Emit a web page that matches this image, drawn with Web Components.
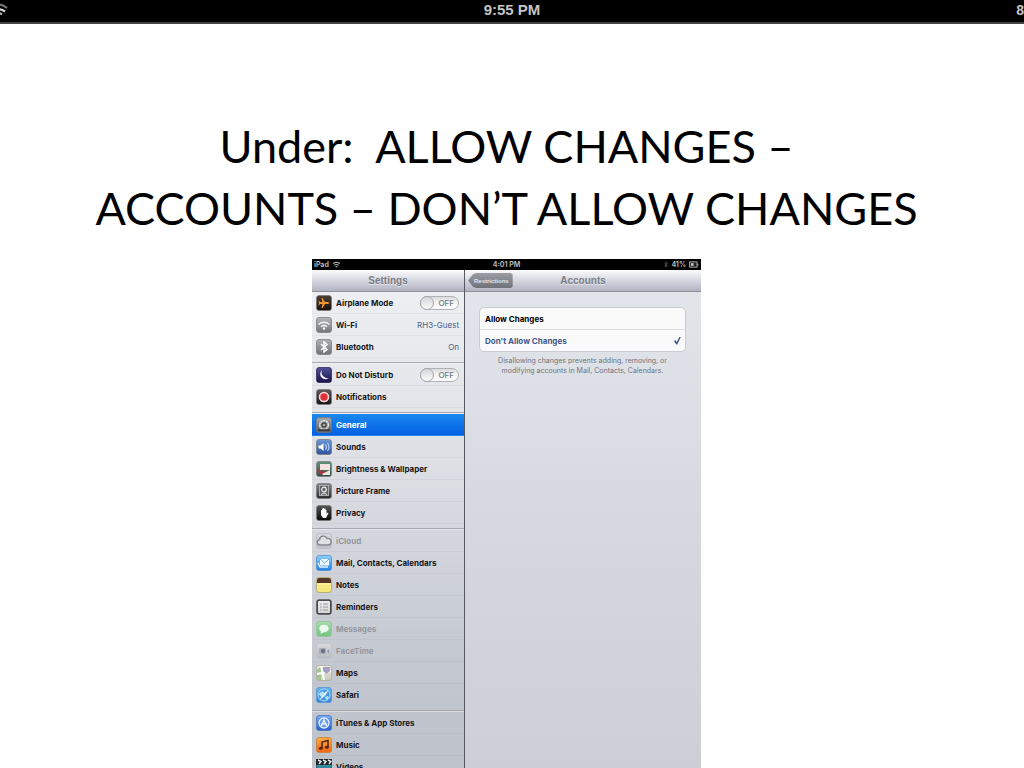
<!DOCTYPE html>
<html lang="en">
<head>
<meta charset="utf-8">
<title>Restrictions: Accounts</title>
<style>
html, body { margin: 0; height: 100%; overflow: hidden; background: #fff; }
body { font-family: "Liberation Sans", Arial, sans-serif; color: #000; }
</style>
</head>
<body>
<slide-page>
  <device-bar slot="bar">9:55 PM</device-bar>
  <slide-title slot="title"><span>Under:&nbsp; ALLOW CHANGES –</span> <span>ACCOUNTS – DON’T ALLOW CHANGES</span></slide-title>
  <settings-screen></settings-screen>
</slide-page>
<script>
function define(name, html, setup) {
  const t = document.createElement('template');
  t.innerHTML = html;
  customElements.define(name, class extends HTMLElement {
    constructor() {
      super();
      this.attachShadow({ mode: 'open' }).append(t.content.cloneNode(true));
    }
    connectedCallback() { if (setup) setup(this, this.shadowRoot); }
  });
}

define('slide-page', `
<style>
:host { display: flex; flex-direction: column; height: 100vh; }
main { flex: 1; min-height: 0; display: flex; flex-direction: column; align-items: center; padding: 91px 11px 0 0; gap: 20px; }
::slotted(settings-screen) { flex: 1; min-height: 0; }
</style>
<slot name="bar"></slot><main><slot name="title"></slot><slot></slot></main>`);

define('device-bar', `
<style>
:host { display: grid; grid-template-columns: 1fr auto 1fr; align-items: start; height: 22px; background: #000; border-bottom: 2px solid #444; color: #c4c4c4; font-weight: bold; font-size: 15px; line-height: 20px; overflow: hidden; }
svg { display: block; width: 8px; height: 20px; }
.battery { text-align: right; font-size: 14px; }
</style>
<svg viewBox="0 0 8 20" fill="none" stroke-width="2.2"><path d="M-9 8Q-1 1 7 8" stroke="#777"/><path d="M-6 11.500Q-1 7 5 11.500" stroke="#ddd"/><path d="M-3 14.500Q-1 12 2 14.500" stroke="#bbb"/></svg>
<span><slot></slot></span><span class="battery">8</span>`);

define('slide-title', `
<style>
:host { display: block; }
h1 { margin: 0; font: 400 45px/62px Lato, sans-serif; text-align: center; }
::slotted(span) { display: block; white-space: nowrap; }
</style>
<h1><slot></slot></h1>`);

const svg = (bg, body, border = '#777') => `<svg viewBox="0 0 16 16"><defs><linearGradient id="g" x2="0" y2="1"><stop stop-color="${bg[0]}"/><stop offset="1" stop-color="${bg[1]}"/></linearGradient></defs><rect x=".5" y=".5" width="15" height="15" rx="2.500" fill="url(#g)" stroke="${border}" stroke-opacity=".7"/>${body}</svg>`;
const ICONS = {
  airplane: svg(['#4a4038', '#15100d'], '<path d="M13.500 8 12 7H9L6.500 3H5.500L6.500 7H4L3 5.500H2.500L3 8l-.5 2.500H3L4 9h2.500l-1 4h1L9 9h3z" fill="#f5952b"/>'),
  wifi: svg(['#b4b6b9', '#74777b'], '<g fill="none" stroke="#f6f6f6" stroke-width="1.500"><path d="M2.500 7.500Q8 3 13.500 7.500M5 9.700Q8 7 11 9.700"/></g><circle cx="8" cy="11.500" r="1.200" fill="#fff"/>'),
  bluetooth: svg(['#b0b2b5', '#707377'], '<path d="M5 5l6 5.500L8 13V3l3 2.500L5 11" fill="none" stroke="#fff" stroke-width="1.400"/>'),
  moon: svg(['#514f97', '#18144d'], '<path d="M6 3A5.200 5.200 0 1 0 13 11 6 6 0 0 1 6 3z" fill="#eef"/>', '#222050'),
  notify: svg(['#615a5a', '#161313'], '<circle cx="8" cy="8" r="4.500" fill="#e33039" stroke="#f3dada" stroke-width="1.600"/>'),
  general: svg(['#a8a9ab', '#57595d'], '<circle cx="8" cy="8" r="4.300" fill="#777" stroke="#e5e5e5" stroke-width="1.600" stroke-dasharray="2.200 .5"/><circle cx="8" cy="8" r="2" fill="#aaa" stroke="#333"/><path d="M2 13h12" stroke="#333" stroke-width="1.500"/>'),
  sounds: svg(['#6f98d5', '#2c539e'], '<path d="M2.500 6.500h2l3-2.500v8l-3-2.500h-2z" fill="#fff"/><path d="M9.500 5.500q2 2.500 0 5M11.500 4q3 4 0 8" fill="none" stroke="#b9d0f5" stroke-width="1.200"/>'),
  brightness: svg(['#62927b', '#344c42'], '<path d="M4 3h10v6H4z" fill="#f4e3e2"/><path d="M2 8l5 3 5-1v3H3z" fill="#b7323b"/><path d="M6 13l8-4v5H7z" fill="#e5ece4"/>'),
  frame: svg(['#85878a', '#292b2e'], '<rect x="3.500" y="2.500" width="9" height="10" fill="#606367" stroke="#aaa"/><circle cx="8" cy="6.500" r="2.300" fill="none" stroke="#eee" stroke-width="1.200"/><path d="M5 11.500q3-3 6 0" stroke="#eee" fill="none"/>'),
  privacy: svg(['#555', '#080808'], '<path d="M5 7V5h1V3.500h1V3h1.300v.7h1.200v1h1V9l1-1.500 1 .5-2.500 5h-3L5 10z" fill="#fff"/>'),
  cloud: svg(['#d6d8dc', '#bfc2c8'], '<path d="M3.500 12a2.700 2.700 0 0 1 0-5.300A3.900 3.900 0 0 1 11 5.500a3 3 0 0 1 1.500 6.500z" fill="#dfe0e4" stroke="#83868c" stroke-width="1.300"/>', '#b4b7bd'),
  mail: svg(['#8fd1fa', '#2581df'], '<rect x="4" y="4" width="9" height="6.500" rx=".5" fill="#f2f9ff"/><path d="M4 4l4.500 4L13 4" fill="none" stroke="#68ade8"/><path d="M2 8l2 4h8" fill="none" stroke="#e4f4ff" stroke-width="1.300"/>', '#438dcf'),
  notes: svg(['#fff6a4', '#f4e778'], '<path d="M1 6V3a2 2 0 0 1 2-2h10a2 2 0 0 1 2 2v3z" fill="#55352a"/><path d="M2 9h12M2 12h12" stroke="#e6d76d" stroke-width=".6"/>', '#a39a65'),
  reminders: svg(['#eee', '#d4d4d4'], '<rect x="1.200" y="1.200" width="13.600" height="13.600" rx="2" fill="none" stroke="#4b4d51" stroke-width="1.600"/><path d="M4 5h1.500M7 5h5M4 8h1.500M7 8h5M4 11h1.500M7 11h5" stroke="#9a9a9a"/>'),
  messages: svg(['#a6dcae', '#73c47f'], '<ellipse cx="8" cy="7.500" rx="4.700" ry="3.800" fill="#ecf8ed"/><path d="M5 10l-.5 3L8 11z" fill="#ecf8ed"/>', '#8dc695'),
  facetime: svg(['#d8dadf', '#b8bbc2'], '<rect x="3" y="5" width="7" height="6" rx="1" fill="#a8adb8"/><circle cx="7" cy="8" r="2" fill="#626b80"/><path d="M11 8l2-1.500v4z" fill="#8c92a0"/>', '#bec1c8'),
  maps: svg(['#f0eee2', '#c8c9bb'], '<path d="M1 5l4-4v14H1z" fill="#a1c68e"/><path d="M5 1l3 14M1 9l14-3" stroke="#fff" stroke-width="2"/><path d="M7 2h7v4l-3.500 3L7 6z" fill="#a79fc4"/>', '#a6a899'),
  safari: svg(['#66b5f2', '#3e85d8'], '<circle cx="8" cy="8" r="6" fill="#4197e5" stroke="#a9d8f8"/><path d="M2.500 7l4-3 2 2-3 4zM9 10l3-1 1 2-3 2z" fill="#b7e1f5"/><path d="M12.500 3L9 9 7 7z" fill="#fff"/><path d="M3.500 13L7 7l2 2z" fill="#dcecff"/>', '#4c92cf'),
  itunes: svg(['#7ca9f1', '#2860cd'], '<circle cx="8" cy="8" r="5" fill="#609cec" stroke="#e3efff" stroke-width="1.300"/><path d="M5.500 11L8 5l2.500 6M5 9h6" fill="none" stroke="#fff" stroke-width="1.200"/>', '#3d70bd'),
  music: svg(['#ffad46', '#ec6514'], '<path d="M6 11V5l6-1.500V10" fill="none" stroke="#55230c" stroke-width="1.500"/><ellipse cx="4.800" cy="11.300" rx="1.900" ry="1.500" fill="#55230c"/><ellipse cx="10.800" cy="10.300" rx="1.900" ry="1.500" fill="#55230c"/>', '#cb772e'),
  videos: svg(['#47a7bd', '#1c6c83'], '<path d="M0 0h16v6H0z" fill="#20282c"/><path d="M2 1l3 1.500L3 5M7 1l3 1.500L8 5M12 1l3 1.500L13 5" fill="none" stroke="#e9eff0" stroke-width="1.400"/>', '#244')
};

define('app-icon', `<style>:host { display: block; width: 16px; height: 16px; } svg { display: block; width: 100%; height: 100%; }</style><span></span>`,
  (el, root) => { root.querySelector('span').innerHTML = ICONS[el.getAttribute('name')]; });

define('off-switch', `
<style>
:host { display: block; }
label { position: relative; display: flex; align-items: center; justify-content: flex-end; box-sizing: border-box; width: 39px; height: 14px; padding-right: 4px; border: 1px solid #b0b2b6; border-radius: 7px; background: linear-gradient(#dcdcde, #fafafa 60%); font: 500 8px/12px Inter, sans-serif; color: #74767c; }
input { appearance: none; position: absolute; left: -1px; top: -1px; width: 14px; height: 14px; margin: 0; border: 1px solid #a5a7ac; border-radius: 50%; background: linear-gradient(#d5d5d7, #fcfcfc); }
</style>
<label><input type="checkbox" role="switch"><span>OFF</span></label>`,
  (el, root) => root.querySelector('input').setAttribute('aria-label', el.getAttribute('label')));

define('settings-row', `
<style>
:host { display: block; }
.row { display: flex; align-items: center; gap: 4px; box-sizing: border-box; height: 22px; padding: 0 5px 0 4px; border-bottom: 1px solid rgba(110, 118, 132, .07); color: #16171a; font-weight: bold; font-size: 8px; line-height: 12px; text-decoration: none; white-space: nowrap; }
.text { flex: 1; }
.value { font-weight: normal; color: #4b618f; }
:host([selected]) .row { color: #fff; background: linear-gradient(#1889ee, #0560e5); }
:host([disabled]) .row { color: #95989f; }
</style>
<div class="row"><app-icon></app-icon><span class="text"><slot></slot></span><span class="value"><slot name="value"></slot></span></div>`,
  (el, root) => {
    const row = root.querySelector('.row');
    const icon = document.createElement('app-icon');
    icon.setAttribute('name', el.getAttribute('icon'));
    row.querySelector('app-icon').replaceWith(icon);
    if (!el.querySelector('off-switch')) {
      const link = document.createElement('a');
      link.className = 'row';
      link.href = '#' + el.getAttribute('icon');
      link.append(...row.childNodes);
      row.replaceWith(link);
    }
  });

define('nav-header', `
<style>
:host { display: grid; grid-template-columns: 1fr auto 1fr; align-items: center; box-sizing: border-box; height: 22px; padding: 0 3px; border-bottom: 1px solid #8f919b; background: linear-gradient(#fbfbfd, #d6d7e1 50%, #b2b3c1); }
h2 { grid-column: 2; margin: 0; font: bold 10px/14px "Liberation Sans", sans-serif; color: #7a7d85; text-shadow: 0 1px #e6e6ee; }
::slotted(button) { grid-row: 1; grid-column: 1; justify-self: start; }
</style>
<slot name="back"></slot><h2><slot></slot></h2>`);

define('choice-list', `
<style>
:host { display: block; border: 1px solid #c9ccd2; border-radius: 5px; background: #fafafb; font-weight: bold; font-size: 8px; line-height: 12px; }
label { display: flex; align-items: center; justify-content: space-between; height: 21px; padding: 0 4px 0 5px; }
label + label { border-top: 1px solid #dcdee2; color: #41578a; }
input { appearance: none; width: 7px; height: 8px; margin: 0; }
input:checked { background: #35507f; clip-path: polygon(0 55%, 18% 45%, 38% 72%, 82% 0, 100% 0, 46% 100%, 34% 100%); }
</style>
<label>Allow Changes<input type="radio" name="accounts"></label>
<label>Don't Allow Changes<input type="radio" name="accounts" checked></label>`);

define('settings-screen', `
<style>
:host { display: flex; flex-direction: column; width: 38%; min-width: 389px; overflow: hidden; background: #000; font-family: Inter, "Liberation Sans", sans-serif; }
.status { flex: none; display: grid; grid-template-columns: 1fr auto 1fr; align-items: center; height: 11px; padding: 0 2px; color: #b5b5b5; font-weight: bold; font-size: 7px; line-height: 10px; }
.status div { display: flex; align-items: center; gap: 3px; }
.status .right { justify-content: flex-end; }
.status svg { display: block; height: 7px; }
.panes { flex: 1; min-height: 0; display: grid; grid-template-columns: 152px 1fr; gap: 1px; background: #55585f; }
nav { overflow: hidden; background: linear-gradient(#f0f1f4, #dfe1e6 35%, #c3c7cf 80%, #bec2ca); }
section { overflow: hidden; background: linear-gradient(#e3e6eb, #d4d7dd 55%, #cccfd6); }
.group + .group { border-top: 1px solid #a5a8af; box-shadow: inset 0 1px rgba(255,255,255,.4); padding-top: 1px; margin-top: 4px; }
button { border: 0; margin: 0; height: 15px; padding: 0 4px 0 6px; background: linear-gradient(#9b9da3, #6f7279); clip-path: polygon(0 50%, 5px 8%, 8px 0, 96% 0, 100% 10%, 100% 90%, 96% 100%, 8px 100%, 5px 92%); font: bold 6px/14px "Liberation Sans", sans-serif; color: #e2e3e7; }
.content { padding: 15px 15px 0 14px; }
p { margin: 4px 0; font-size: 7px; line-height: 10px; text-align: center; color: #6f7480; }
p span { display: block; white-space: nowrap; }
</style>
<div class="status">
  <div>iPad <svg viewBox="0 0 10 8" width="9" fill="none" stroke="#aaa" stroke-width="1.300"><path d="M1 3Q5 0 9 3M2.500 5Q5 3 7.500 5M4 7q1-1 2 0"/></svg></div>
  <span>4:01 PM</span>
  <div class="right"><svg viewBox="0 0 5 8" width="4" fill="none" stroke="#555"><path d="M.5 2l4 3.500-2 2V.5l2 2-4 3.500"/></svg><span>41%</span><svg viewBox="0 0 11 8" width="10"><rect x=".5" y="1" width="8.500" height="6" fill="#222" stroke="#bbb"/><path d="M2 2.500h3v3H2zM9.500 3h1v2h-1z" fill="#ccc"/></svg></div>
</div>
<div class="panes">
  <nav>
    <nav-header>Settings</nav-header>
    <div class="group">
      <settings-row icon="airplane">Airplane Mode<off-switch slot="value" label="Airplane Mode"></off-switch></settings-row>
      <settings-row icon="wifi">Wi-Fi<span slot="value">RH3-Guest</span></settings-row>
      <settings-row icon="bluetooth">Bluetooth<span slot="value">On</span></settings-row>
    </div>
    <div class="group">
      <settings-row icon="moon">Do Not Disturb<off-switch slot="value" label="Do Not Disturb"></off-switch></settings-row>
      <settings-row icon="notify">Notifications</settings-row>
    </div>
    <div class="group">
      <settings-row icon="general" selected>General</settings-row>
      <settings-row icon="sounds">Sounds</settings-row>
      <settings-row icon="brightness">Brightness &amp; Wallpaper</settings-row>
      <settings-row icon="frame">Picture Frame</settings-row>
      <settings-row icon="privacy">Privacy</settings-row>
    </div>
    <div class="group">
      <settings-row icon="cloud" disabled>iCloud</settings-row>
      <settings-row icon="mail">Mail, Contacts, Calendars</settings-row>
      <settings-row icon="notes">Notes</settings-row>
      <settings-row icon="reminders">Reminders</settings-row>
      <settings-row icon="messages" disabled>Messages</settings-row>
      <settings-row icon="facetime" disabled>FaceTime</settings-row>
      <settings-row icon="maps">Maps</settings-row>
      <settings-row icon="safari">Safari</settings-row>
    </div>
    <div class="group">
      <settings-row icon="itunes">iTunes &amp; App Stores</settings-row>
      <settings-row icon="music">Music</settings-row>
      <settings-row icon="videos">Videos</settings-row>
    </div>
  </nav>
  <section>
    <nav-header><button slot="back" type="button">Restrictions</button>Accounts</nav-header>
    <div class="content">
      <choice-list></choice-list>
      <p><span>Disallowing changes prevents adding, removing, or</span> <span>modifying accounts in Mail, Contacts, Calendars.</span></p>
    </div>
  </section>
</div>`);
</script>
</body>
</html>
